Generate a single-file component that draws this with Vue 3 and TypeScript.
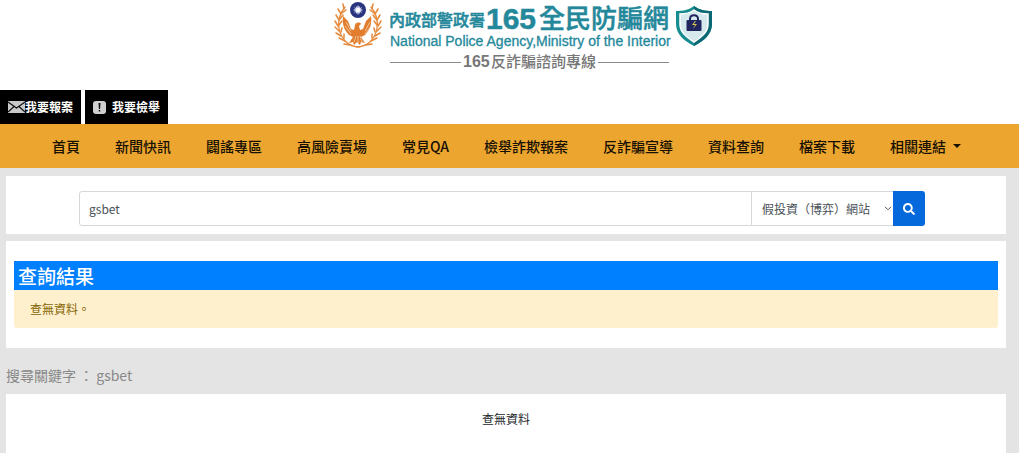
<script setup lang="ts">
import { ref } from 'vue'

const links: string[] = [
  '首頁',
  '新聞快訊',
  '闢謠專區',
  '高風險賣場',
  '常見QA',
  '檢舉詐欺報案',
  '反詐騙宣導',
  '資料查詢',
  '檔案下載',
]

const categories: string[] = ['假投資（博弈）網站', '詐騙LINE ID', '詐騙電話']

const keyword = ref('gsbet')
const searched = ref('gsbet')
const category = ref(categories[0])

function search(): void {
  searched.value = keyword.value
}
</script>

<template>
  <div class="page">
    <header class="header">
      <a class="logo" href="#" aria-label="165全民防騙網">
        <svg width="408" height="76" viewBox="306 0 408 76">
          <g fill="none" stroke="#e58a3c" stroke-linecap="round">
            <path d="M345 7c-8 10-9 23 0 34 4 4 9 6 15 6M371 7c8 10 9 23 0 34-4 4-9 6-15 6" stroke-width="1.3" />
            <path d="M344 9l-1-5M341 14l-3-5M339 20l-3-5M338 26l-3-5M339 31l-4-4M341 36l-5-3M345 41l-6-3M350 45l-6-1M342 13l4-3M340 19l3-4M339 25l3-4M341 32l1-4M344 38v-4M372 9l1-5M375 14l3-5M377 20l3-5M378 26l3-5M377 31l4-4M375 36l5-3M371 41l6-3M366 45l6-1M374 13l-4-3M376 19l-3-4M377 25l-3-4M375 32l-1-4M372 38v-4" stroke-width="1.5" />
          </g>
          <path d="M343 16l5 5 3 8 3 1 1-5c1-3 5-3 6-1l-2 2 1 4 3-1 3-8 5-5c1 8-1 14-6 19l-4 2 4 6-4-1-1 3-3-3-3 3-1-3-4 1 4-6-4-2c-5-5-7-11-6-19z" fill="#e17d2c" />
          <path d="M346 22l5 9M345 26l6 8M370 22l-5 9M371 26l-6 8M356 36l-2 6M358 36v7M360 36l2 6" stroke="#fbe3cc" stroke-width=".7" />
          <circle cx="358" cy="10" r="8" fill="#29347f" />
          <path d="M358 5l1 2 1-1v2l2-1-1 2 2 1-2 1 1 2-2-1v2l-1-1-1 2-1-2-1 1v-2l-2 1 1-2-2-1 2-1-1-2 2 1V6l1 1z" fill="#bcc5e6" />
          <circle cx="358" cy="10" r="2.200" fill="#fff" />
          <g class="brand">
            <text x="389" y="26" font-size="16">內政部警政署</text>
            <text class="number" x="486" y="29" font-size="30">165</text>
            <text x="539" y="28" font-size="26">全民防騙網</text>
            <text class="english" x="390" y="46" font-size="14">National Police Agency,Ministry of the Interior</text>
          </g>
          <path d="M390 62.500h71M598 62.500h71" stroke="#888" />
          <g class="hotline">
            <text class="number" x="463" y="67" font-size="16">165</text>
            <text x="491" y="67" font-size="15">反詐騙諮詢專線</text>
          </g>
          <path d="M694 6c5 4 11 5 18 5v13c0 10-8 17-18 22-10-5-18-12-18-22V11c7 0 13-1 18-5z" fill="#168b90" />
          <path d="M694 6c5 4 11 5 18 5v13c0 10-8 17-18 22z" fill="#0c6873" />
          <path d="M694 10c4 3 9 4 14 4v10c0 8-6 13-14 18-8-5-14-10-14-18V14c5 0 10-1 14-4z" fill="#d6e9ed" stroke="#fff" stroke-width="1.500" />
          <path d="M690 21v-2c0-5 8-5 8 0v2" fill="none" stroke="#20245f" stroke-width="2" />
          <rect x="686.500" y="20" width="15" height="11" rx="1" fill="#20245f" />
          <path d="M695 21l-3 4h3l-2 4 4-5h-3l2-3z" fill="#d6c452" />
        </svg>
      </a>
      <div class="reports">
        <button type="button" class="report">
          <svg width="17" height="12" viewBox="0 0 17 12">
            <rect width="17" height="12" fill="#c9c9c9" />
            <path d="M0 1l8.500 6L17 1M0 11l6-5.500M17 11l-6-5.500" fill="none" stroke="#111" stroke-width="1.200" />
          </svg>
          <span>我要報案</span>
        </button>
        <button type="button" class="report spaced">
          <svg width="13" height="13" viewBox="0 0 13 13">
            <rect width="13" height="13" rx="3" fill="#d0d0d0" />
            <path d="M5.500 2h2l-.4 6H5.900zM5.700 9h1.600v1.600H5.700z" fill="#111" />
          </svg>
          <span>我要檢舉</span>
        </button>
      </div>
    </header>

    <nav class="nav">
      <a v-for="link in links" :key="link" href="#">{{ link }}</a>
      <a href="#" class="more">相關連結<span class="caret"></span></a>
    </nav>

    <main class="content">
      <section class="panel search-panel">
        <form class="search" @submit.prevent="search">
          <input v-model="keyword" type="text" aria-label="搜尋關鍵字" />
          <div class="picker">
            <select v-model="category" aria-label="查詢類別">
              <option v-for="item in categories" :key="item">{{ item }}</option>
            </select>
            <svg class="chevron" width="8" height="5" viewBox="0 0 8 5">
              <path d="M1 .8l3 3 3-3" fill="none" stroke="#555" />
            </svg>
          </div>
          <button type="submit" aria-label="搜尋">
            <svg width="12" height="12" viewBox="0 0 512 512">
              <path fill="#fff" d="M505 442.700L405.300 343c-4.500-4.500-10.600-7-17-7H372c27.600-35.300 44-79.700 44-128C416 93.100 322.900 0 208 0S0 93.100 0 208s93.100 208 208 208c48.300 0 92.700-16.400 128-44v16.300c0 6.400 2.500 12.500 7 17l99.700 99.700c9.400 9.400 24.600 9.400 33.900 0l28.300-28.300c9.400-9.400 9.400-24.600.1-34zM208 336c-70.700 0-128-57.200-128-128 0-70.700 57.200-128 128-128 70.700 0 128 57.200 128 128 0 70.700-57.200 128-128 128z" />
            </svg>
          </button>
        </form>
      </section>

      <section class="panel result-panel">
        <h1>查詢結果</h1>
        <p class="alert">查無資料。</p>
      </section>

      <h2>搜尋關鍵字 ： {{ searched }}</h2>

      <section class="panel empty-panel">查無資料</section>
    </main>
  </div>
</template>

<style>
body {
  background: #e4e4e4;
}
</style>

<style scoped>
.page {
  font-family: "Noto Sans CJK TC", sans-serif;
  font-size: 12px;
  line-height: 18px;
  color: #212529;
}
.page * {
  box-sizing: border-box;
}
.header {
  background: #fff;
}
.logo {
  display: flex;
  justify-content: center;
  height: 90px;
}
.logo svg {
  overflow: visible;
}
.brand {
  fill: #24889b;
  stroke: #24889b;
  stroke-width: 0.5px;
  font-weight: 500;
}
.number {
  font-family: "Liberation Sans", sans-serif;
  font-weight: 700;
}
.english {
  font-family: "Liberation Sans", sans-serif;
  font-weight: 400;
  stroke-width: 0.3px;
}
.hotline {
  fill: #777;
  font-weight: 500;
}
.reports {
  display: flex;
  gap: 4px;
}
.report {
  display: flex;
  align-items: center;
  height: 34px;
  padding: 0 8px;
  border: 0;
  background: #000;
  color: #fff;
  font: 700 12px/18px "Noto Sans CJK TC", sans-serif;
}
.spaced {
  gap: 6px;
}
.nav {
  display: flex;
  justify-content: center;
  align-items: center;
  gap: 35px;
  height: 44px;
  padding-right: 6px;
  background: #eca62f;
}
.nav a {
  color: #171003;
  font-size: 14px;
  font-weight: 500;
  line-height: 20px;
  text-decoration: none;
  white-space: nowrap;
}
.nav .more {
  display: flex;
  align-items: center;
  gap: 7px;
}
.caret {
  border: 4px solid transparent;
  border-top-color: #171003;
  border-bottom: 0;
}
.content {
  padding: 8px 13px 0 6px;
}
.panel {
  background: #fff;
}
.search-panel {
  padding: 15px 81px 8px 73px;
}
.search {
  display: flex;
  height: 35px;
}
.search input {
  flex: 1;
  min-width: 0;
  padding: 0 9px;
  border: 1px solid #d4d8dc;
  border-radius: 3px 0 0 3px;
  color: #495057;
  font: inherit;
  outline: 0;
}
.picker {
  position: relative;
  width: 141px;
}
.search select {
  width: 100%;
  height: 100%;
  padding: 0 10px;
  border: solid #d4d8dc;
  border-width: 1px 0;
  border-radius: 0;
  background: #fff;
  color: #495057;
  font: inherit;
  appearance: none;
}
.chevron {
  position: absolute;
  top: 15px;
  right: 1px;
  pointer-events: none;
}
.search button {
  display: flex;
  align-items: center;
  justify-content: center;
  width: 32px;
  padding: 0;
  border: 0;
  border-radius: 0 3px 3px 0;
  background: #0569dc;
}
.result-panel {
  margin-top: 7px;
  padding: 20px 8px;
}
h1 {
  margin: 0;
  padding: 0 4px;
  background: #007fff;
  color: #fff;
  font-size: 19px;
  font-weight: 500;
  line-height: 29px;
}
.alert {
  margin: 0;
  padding: 10px 16px;
  border-radius: 0 0 3px 3px;
  background: #fff0cd;
  color: #856404;
}
h2 {
  margin: 0;
  padding: 16px 0 8px;
  color: #888;
  font-size: 14px;
  font-weight: 400;
  line-height: 22px;
}
.empty-panel {
  padding: 16px 0 25px;
  text-align: center;
}
</style>
